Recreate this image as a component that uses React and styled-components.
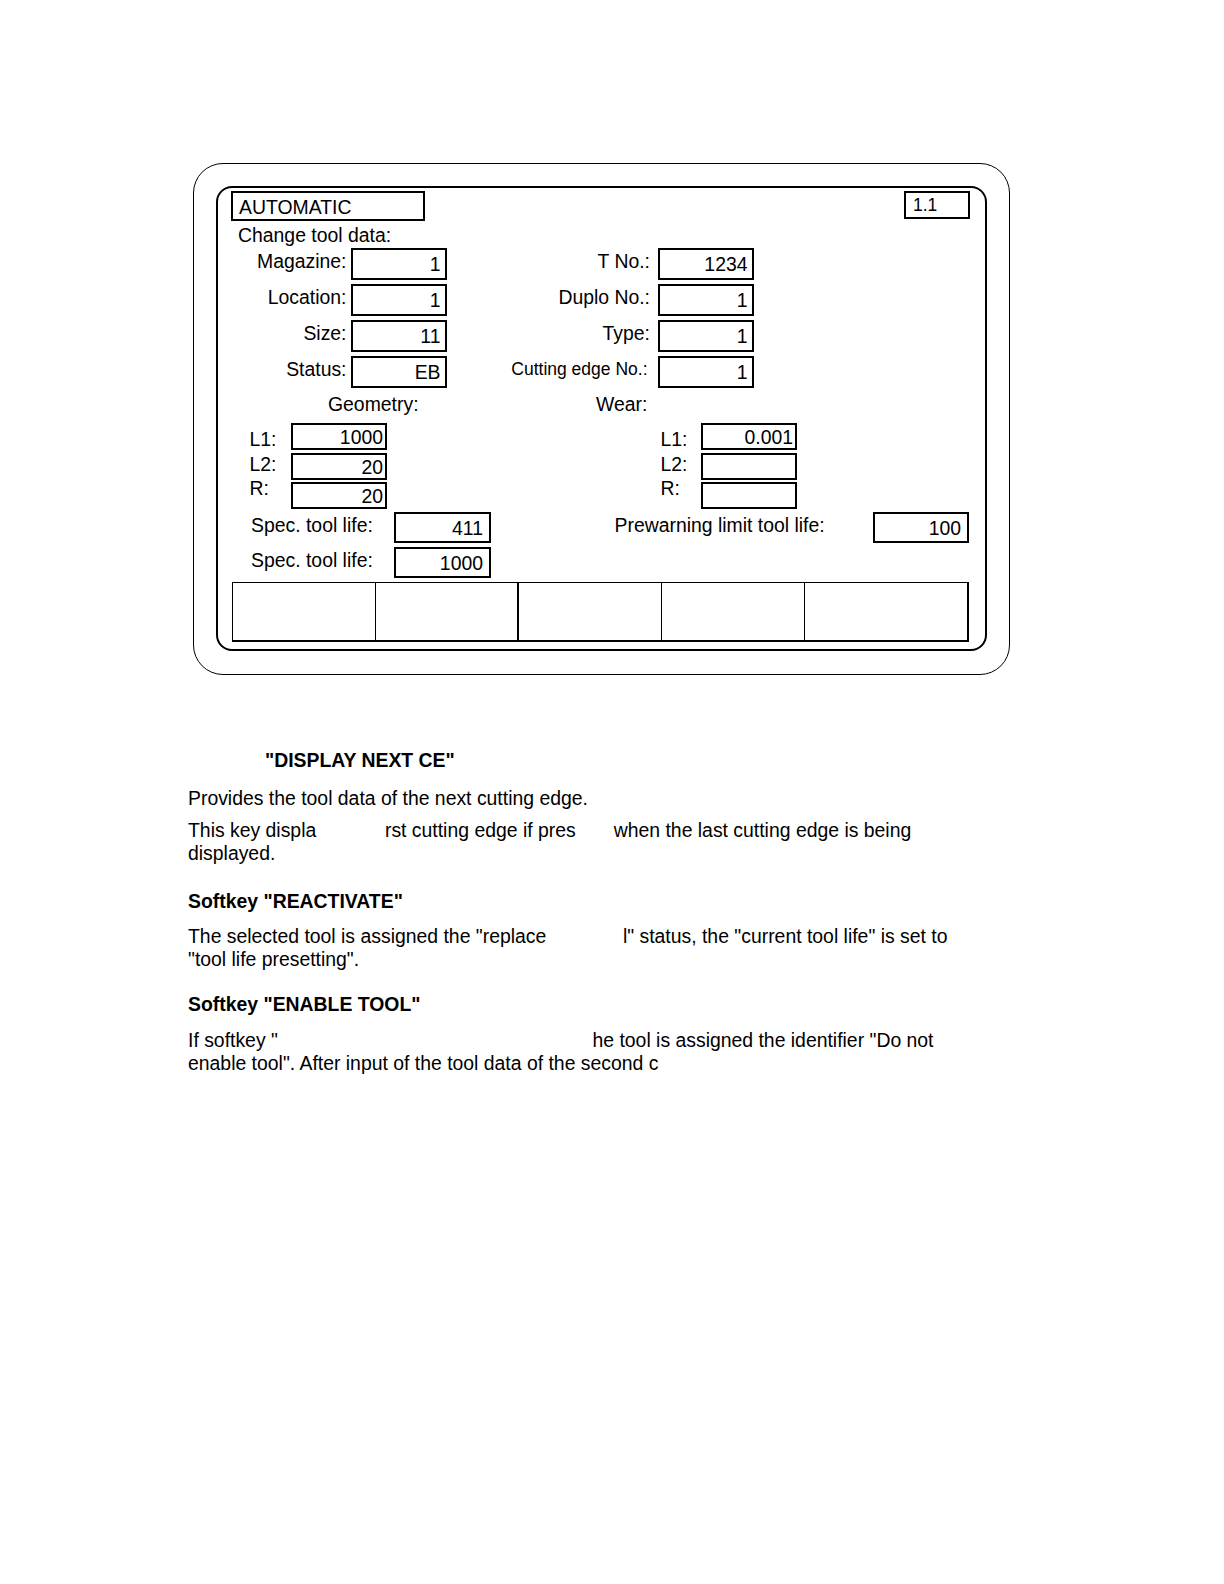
import React from 'react';
import styled, { createGlobalStyle } from 'styled-components';

const GlobalStyle = createGlobalStyle`
  html, body {
    margin: 0;
    padding: 0;
    background: #fff;
  }
  body {
    font-family: "Liberation Sans", Arial, Helvetica, sans-serif;
    color: #000;
  }
  * {
    box-sizing: border-box;
  }
`;

const mainFields = [
  { left: 'Magazine:', leftValue: '1', right: 'T No.:', rightValue: '1234' },
  { left: 'Location:', leftValue: '1', right: 'Duplo No.:', rightValue: '1' },
  { left: 'Size:', leftValue: '11', right: 'Type:', rightValue: '1' },
  { left: 'Status:', leftValue: 'EB', right: 'Cutting edge No.:', rightValue: '1', small: true },
];

const geometry = [
  { label: 'L1:', value: '1000' },
  { label: 'L2:', value: '20' },
  { label: 'R:', value: '20' },
];

const wear = [
  { label: 'L1:', value: '0.001' },
  { label: 'L2:', value: '' },
  { label: 'R:', value: '' },
];

// softkey cell widths and divider thickness
const softkeys = [
  { w: 143, border: 1 },
  { w: 143, border: 2 },
  { w: 143, border: 1 },
  { w: 143, border: 1 },
  { w: 0, border: 0 },
];

const App = () => {
  return (
    <>
      <GlobalStyle />
      <Page>
        <OuterFrame>
          <InnerFrame>
            <Header>
              <ModeBox>AUTOMATIC</ModeBox>
              <ChannelBox>1.1</ChannelBox>
            </Header>
            <Title>Change tool data:</Title>

            <FieldRows>
              {mainFields.map((f) => (
                <FieldRow key={f.left}>
                  <FieldLabel $w={120} $gap={4.5}>{f.left}</FieldLabel>
                  <ValueBox>{f.leftValue}</ValueBox>
                  <FieldLabel $w={211} $gap={f.small ? 10.5 : 8} $small={f.small}>{f.right}</FieldLabel>
                  <ValueBox>{f.rightValue}</ValueBox>
                </FieldRow>
              ))}
            </FieldRows>

            <GroupTitles>
              <GroupTitle $w={365} $indent={97}>Geometry:</GroupTitle>
              <GroupTitle>Wear:</GroupTitle>
            </GroupTitles>

            <OffsetRow>
              <OffsetGroup $ml={18.5}>
                <OffsetLabels $w={41.5}>
                  {geometry.map((g) => <div key={g.label}>{g.label}</div>)}
                </OffsetLabels>
                <OffsetBoxes>
                  {geometry.map((g) => <SmallBox key={g.label}>{g.value}</SmallBox>)}
                </OffsetBoxes>
              </OffsetGroup>
              <OffsetGroup $ml={273.5}>
                <OffsetLabels $w={40.5}>
                  {wear.map((g) => <div key={g.label}>{g.label}</div>)}
                </OffsetLabels>
                <OffsetBoxes>
                  {wear.map((g) => <SmallBox key={g.label}>{g.value}</SmallBox>)}
                </OffsetBoxes>
              </OffsetGroup>
            </OffsetRow>

            <LifeRows>
              <LifeRow>
                <LifeLabel $w={163} $indent={20}>Spec. tool life:</LifeLabel>
                <ValueBox $w={97} $h={31} $pr={6}>411</ValueBox>
                <LifeLabel $w={382} $indent={123.5}>Prewarning limit tool life:</LifeLabel>
                <ValueBox $h={31} $pr={6}>100</ValueBox>
              </LifeRow>
              <LifeRow>
                <LifeLabel $w={163} $indent={20}>Spec. tool life:</LifeLabel>
                <ValueBox $w={97} $h={31} $pr={6}>1000</ValueBox>
              </LifeRow>
            </LifeRows>

            <SoftkeyBar>
              {softkeys.map((s, i) => (
                <SoftkeyCell key={i} $w={s.w} $border={s.border} />
              ))}
            </SoftkeyBar>
          </InnerFrame>
        </OuterFrame>

        <Doc>
          <Section>
            <Heading $indent={77} $mb={15.4}>"DISPLAY NEXT CE"</Heading>
            <Para>Provides the tool data of the next cutting edge.</Para>
            <Para $mt={9.4}>
              This key displa<Gap $w={68.7} />rst cutting edge if pres<Gap $w={38} />when the last cutting edge is being displayed.
            </Para>
          </Section>
          <Section $mt={25.8}>
            <Heading $mb={12.4}>Softkey "REACTIVATE"</Heading>
            <Para>
              The selected tool is assigned the "replace<Gap $w={76.6} />l" status, the "current tool life" is set to "tool life presetting".
            </Para>
          </Section>
          <Section $mt={22.8}>
            <Heading $mb={13.4}>Softkey "ENABLE TOOL"</Heading>
            <Para>
              If softkey "<Gap $w={314.6} />he tool is assigned the identifier "Do not enable tool". After input of the tool data of the second c
            </Para>
          </Section>
        </Doc>
      </Page>
    </>
  );
};

const Page = styled.div`
  width: 1224px;
  min-height: 1584px;
  padding-top: 163px;
`;

const OuterFrame = styled.div`
  margin-left: 193px;
  width: 817px;
  height: 512px;
  border: 1px solid #000;
  border-radius: 30px;
  padding: 22px;
`;

const InnerFrame = styled.div`
  border: 2px solid #000;
  border-radius: 16px;
  padding: 3px 15px 7px 13px;
  font-size: 19.4px;
`;

const Header = styled.div`
  display: flex;
  justify-content: space-between;
  align-items: flex-start;
`;

const ModeBox = styled.div`
  width: 194px;
  height: 30px;
  border: 2px solid #000;
  padding: 1px 6px 0;
  line-height: 26px;
  white-space: nowrap;
`;

const ChannelBox = styled.div`
  width: 66px;
  height: 28px;
  border: 2px solid #000;
  padding: 1px 7px 0;
  font-size: 17.5px;
  line-height: 22px;
`;

const Title = styled.div`
  margin-top: 3px;
  padding-left: 7px;
  line-height: 22px;
`;

const FieldRows = styled.div`
  display: flex;
  flex-direction: column;
  gap: 4px;
  margin-top: 2px;
`;

const FieldRow = styled.div`
  display: flex;
  align-items: flex-start;
`;

const FieldLabel = styled.div`
  width: ${(p) => p.$w}px;
  padding-right: ${(p) => p.$gap}px;
  padding-top: 2px;
  text-align: right;
  font-size: ${(p) => (p.$small ? '17.5px' : '19.4px')};
  line-height: 22px;
  white-space: nowrap;
`;

const ValueBox = styled.div`
  width: ${(p) => p.$w || 96}px;
  height: ${(p) => p.$h || 32}px;
  border: 2px solid #000;
  padding: 3px ${(p) => p.$pr ?? 4.5}px 0 4px;
  text-align: right;
  line-height: 22px;
  white-space: nowrap;
`;

const GroupTitles = styled.div`
  display: flex;
  margin-top: 5px;
  line-height: 22px;
`;

const GroupTitle = styled.div`
  width: ${(p) => (p.$w ? `${p.$w}px` : 'auto')};
  padding-left: ${(p) => p.$indent || 0}px;
`;

const OffsetRow = styled.div`
  display: flex;
  margin-top: 8px;
`;

const OffsetGroup = styled.div`
  display: flex;
  margin-left: ${(p) => p.$ml}px;
`;

const OffsetLabels = styled.div`
  width: ${(p) => p.$w}px;
  padding-top: 4px;
  line-height: 24.5px;
`;

const OffsetBoxes = styled.div`
  display: flex;
  flex-direction: column;
  gap: 2.5px;
`;

const SmallBox = styled.div`
  width: 96px;
  height: 27px;
  border: 2px solid #000;
  padding: 1px 2px 0 4px;
  text-align: right;
  line-height: 22px;
`;

const LifeRows = styled.div`
  display: flex;
  flex-direction: column;
  gap: 4px;
  margin-top: 3px;
`;

const LifeRow = styled.div`
  display: flex;
  align-items: flex-start;
`;

const LifeLabel = styled.div`
  width: ${(p) => p.$w}px;
  padding-left: ${(p) => p.$indent}px;
  padding-top: 2px;
  line-height: 22px;
  white-space: nowrap;
`;

const SoftkeyBar = styled.div`
  display: flex;
  width: 737px;
  height: 60px;
  margin: 4px 0 0 1px;
  border-top: 1px solid #000;
  border-left: 1px solid #000;
  border-bottom: 2px solid #000;
  border-right: 2px solid #000;
`;

const SoftkeyCell = styled.div`
  flex: ${(p) => (p.$w ? `0 0 ${p.$w}px` : '1')};
  border-right: ${(p) => p.$border}px solid #000;
`;

const Doc = styled.div`
  margin: 74px 0 0 188px;
  width: 772px;
  font-size: 19.4px;
  line-height: 22.6px;
`;

const Section = styled.section`
  margin-top: ${(p) => p.$mt || 0}px;
`;

const Heading = styled.h3`
  margin: 0 0 ${(p) => p.$mb}px;
  padding-left: ${(p) => p.$indent || 0}px;
  font-size: 19.4px;
  font-weight: bold;
  line-height: 22.6px;
`;

const Para = styled.p`
  margin: ${(p) => p.$mt || 0}px 0 0;
`;

const Gap = styled.span`
  display: inline-block;
  width: ${(p) => p.$w}px;
`;

export default App;
